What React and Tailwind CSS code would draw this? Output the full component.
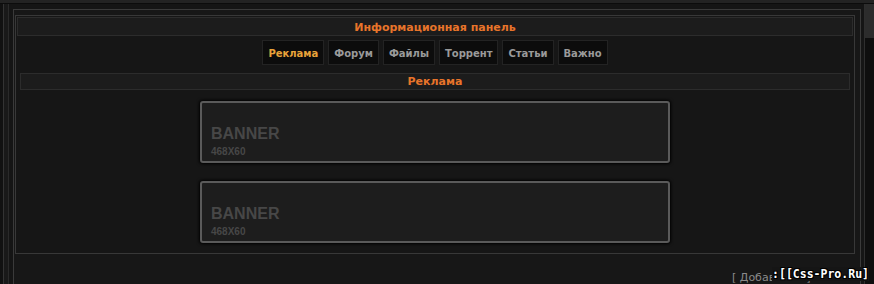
export default function App() {
  const tabs = ["Реклама", "Форум", "Файлы", "Торрент", "Статьи", "Важно"];
  const font = { fontFamily: '"DejaVu Sans", Verdana, sans-serif' };
  const Banner = () => (
    <div className="w-[470px] h-[62px] rounded-[3px] border-2 border-[#5a5a5a] bg-[#1d1d1d] shadow-[0_0_3px_1px_#000] flex flex-col justify-end pl-[9px] pb-[4px]">
      <div className="text-[16px] leading-[16px] font-bold text-[#474747]" style={{ fontFamily: '"Liberation Sans", Arial, sans-serif' }}>BANNER</div>
      <div className="text-[10px] leading-[10px] font-bold text-[#474747] mt-[5px]" style={{ fontFamily: '"Liberation Sans", Arial, sans-serif' }}>468X60</div>
    </div>
  );
  return (
    <div className="w-[874px] h-[284px] bg-[#151515] relative overflow-hidden flex flex-col" style={font}>
      <div className="h-[4px] bg-[#232323] border-b border-[#0c0c0c] shrink-0" />
      <div className="flex flex-1 min-h-0">
        <div className="w-[13px] flex shrink-0">
          <div className="w-[3px] bg-[#111]" />
          <div className="w-[5px] border-l border-[#333] bg-[#191919]" />
          <div className="w-[5px] border-l border-[#2a2a2a]" />
        </div>
        <div className="flex-1 mt-[5px] border-l border-t border-r border-[#3a3a3a] bg-[#171717] pl-[1px] pr-[5px] pt-[5px]">
          <div className="border border-[#383838] bg-[#161616] p-[1px] pb-[10px]">
            <div className="h-[19px] bg-[#1c1c1c] border border-[#2c2c2c] flex items-center justify-center pt-[3px] text-[11px] font-bold text-[#e8742a]">
              Информационная панель
            </div>
            <div className="flex justify-center gap-[4px] mt-[4px]">
              {tabs.map((t, i) => (
                <div
                  key={t}
                  className={
                    "h-[25px] px-[5px] bg-[#0c0c0c] border border-[#232323] flex items-center pt-[1px] text-[10px] font-bold " +
                    (i === 0 ? "text-[#e9a33a]" : "text-[#9a9a9a]")
                  }
                >
                  {t}
                </div>
              ))}
            </div>
            <div className="mx-[3px] mt-[8px] h-[17px] bg-[#1c1c1c] border border-[#2c2c2c] flex items-center justify-center pt-[1px] text-[11px] font-bold text-[#e8742a]">
              Реклама
            </div>
            <div className="flex flex-col items-center gap-[18px] mt-[11px]">
              <Banner />
              <Banner />
            </div>
          </div>
          <div className="pl-[717px] mt-[10px]">
            <span className="text-[11px] leading-[14px] text-[#8a8a8a] whitespace-nowrap">[ Добавлено ]</span>
          </div>
        </div>
        <div className="w-[13px] flex shrink-0">
          <div className="w-[3px]" />
          <div className="w-[1px] bg-[#2e2e2e]" />
          <div className="flex-1 flex flex-col">
            <div className="h-[34px] bg-[#2c2c2c]" />
            <div className="flex-1 bg-[#0e0e0e]" />
          </div>
        </div>
      </div>
      <div
        className="absolute right-[5px] bottom-[3px] text-[11.5px] leading-[14px] font-bold text-white bg-[#151515]"
        style={{ fontFamily: '"DejaVu Sans Mono", monospace', textShadow: "1px 1px 0 #000, -1px -1px 0 #000, 1px -1px 0 #000, -1px 1px 0 #000" }}
      >
        :[[Css-Pro.Ru]
      </div>
    </div>
  );
}
